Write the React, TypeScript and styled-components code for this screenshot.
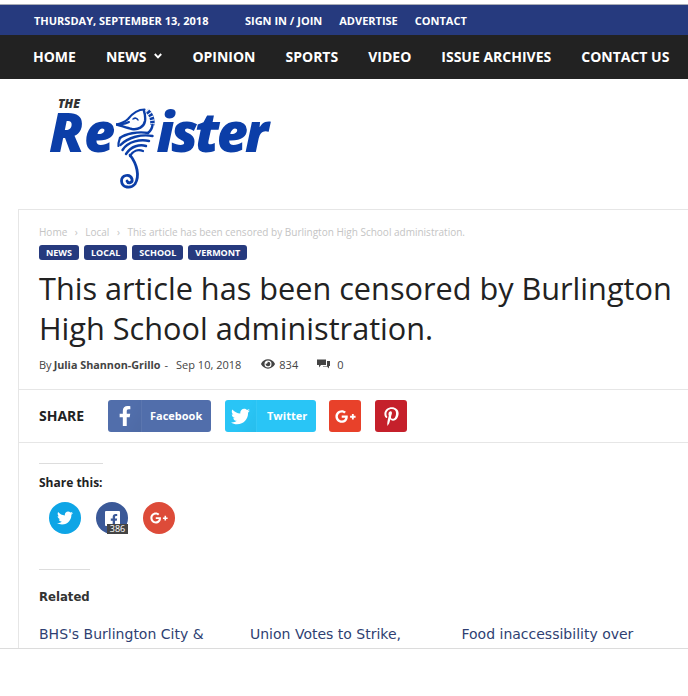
import React from 'react';
import styled, { createGlobalStyle } from 'styled-components';
import { FaFacebookF, FaTwitter, FaGooglePlusG, FaPinterestP, FaEye } from 'react-icons/fa';

const GlobalStyle = createGlobalStyle`
  html, body {
    margin: 0;
    padding: 0;
    background: #fff;
  }
  body {
    font-family: "Open Sans", "Liberation Sans", sans-serif;
    overflow: hidden;
  }
`;

const topLinks = ['Sign in / Join', 'Advertise', 'Contact'];
const navLinks = ['Home', 'News', 'Opinion', 'Sports', 'Video', 'Issue Archives', 'Contact Us'];
const tags = ['News', 'Local', 'School', 'Vermont'];
const related = ["BHS's Burlington City &", 'Union Votes to Strike,', 'Food inaccessibility over'];

const Seahorse = () => (
  <HorseSvg viewBox="0 0 40 82" width="40" height="82">
    <g fill="none" stroke="#0b3ea8" strokeLinecap="round" strokeLinejoin="round">
      <path d="M0.5 16.5 C5 15.5 9 14 12 11 C16 6 22 1.5 28.5 1.5" strokeWidth="2.2" />
      <path d="M0.5 16.5 C6 18 11 20 16 21 C22 22 28 19 29 13 C29.5 9 29 6 28 3" strokeWidth="2.4" />
      <path d="M3 16.8 C7 16 10 15.5 13 14" strokeWidth="2" />
      <path d="M17 11 C19 9.5 21 10 22 12" strokeWidth="1.5" />
      <path d="M31 2.5 C35 6 37 11 36.5 17" strokeWidth="4.5" strokeLinecap="butt" />
      <path d="M31 2.5 C35 6 37 11 36.5 17" stroke="#fff" strokeWidth="4.6" strokeLinecap="butt" strokeDasharray="1 2.6" />
      <path d="M36.5 17 C36 21 34.5 23 32 25" strokeWidth="2.4" />
      <path d="M32 25 C22 23 9 26 4 30" strokeWidth="2.4" />
      <path d="M4 30 C3 33 2 35 2.5 38" strokeWidth="2.2" />
      <path d="M36.5 28 C26 26 12 29 4.5 37" strokeWidth="2.4" />
      <path d="M33 33 C25 31 12 33 6.5 42" strokeWidth="2.4" />
      <path d="M30 38 C24 36 15 38 10 46" strokeWidth="2.4" />
      <path d="M27 43 C22 41 17 43 14 48" strokeWidth="2.2" />
      <path d="M14 47 C21 56 24 68 19 76 C15 81 6 80 5.5 73 C5.5 67 14 65 16 71 C17 75 12 76 11 73" strokeWidth="2.8" />
    </g>
  </HorseSvg>
);

const App = () => {
  return (
    <Page>
      <GlobalStyle />
      <TopBar>
        <DateText>Thursday, September 13, 2018</DateText>
        <TopLinks>
          {topLinks.map((link) => (
            <TopLink key={link}>{link}</TopLink>
          ))}
        </TopLinks>
      </TopBar>
      <NavBar>
        {navLinks.map((link) => (
          <NavLink key={link}>
            {link}
            {link === 'News' && (
              <svg width="8" height="6" viewBox="0 0 8 6">
                <path d="M0.8 1 L4 4.4 L7.2 1" fill="none" stroke="#fff" strokeWidth="1.9" />
              </svg>
            )}
          </NavLink>
        ))}
      </NavBar>
      <Masthead>
        <Logo>
          <LogoThe>THE</LogoThe>
          <LogoWord>
            <span>Re</span>
            <Seahorse />
            <LogoTail>ister</LogoTail>
          </LogoWord>
        </Logo>
      </Masthead>
      <Card>
        <ArticleHead>
          <Breadcrumbs>
            <span>Home</span>
            <Chevron>›</Chevron>
            <span>Local</span>
            <Chevron>›</Chevron>
            <span>This article has been censored by Burlington High School administration.</span>
          </Breadcrumbs>
          <Tags>
            {tags.map((tag) => (
              <Tag key={tag}>{tag}</Tag>
            ))}
          </Tags>
          <Title>This article has been censored by Burlington High School administration.</Title>
          <Meta>
            <span>By</span>
            <Author>Julia Shannon-Grillo</Author>
            <span>-</span>
            <DateLabel>Sep 10, 2018</DateLabel>
            <Stat $gap={20}>
              <FaEye size={14} color="#444" />
              834
            </Stat>
            <Stat $gap={19}>
              <svg width="13" height="10" viewBox="0 0 13 10">
                <path d="M0 0.5 H9 V6 H4 L2 8.5 V6 H0 Z M10 2 H13 V7 H12 V9.5 L10 7.5 H6 L6 7 H10 Z" fill="#444" />
              </svg>
              <StatZero>0</StatZero>
            </Stat>
          </Meta>
        </ArticleHead>
        <ShareRow>
          <ShareLabel>Share</ShareLabel>
          <WideButton $bg="#516eab" $w={103}>
            <ButtonIcon $w={34}><FaFacebookF size={20} /></ButtonIcon>
            <ButtonText $ml={8}>Facebook</ButtonText>
          </WideButton>
          <WideButton $bg="#29c5f6" $w={91}>
            <ButtonIcon $w={32}><FaTwitter size={19} /></ButtonIcon>
            <ButtonText $ml={10}>Twitter</ButtonText>
          </WideButton>
          <SquareGroup>
            <SquareButton $bg="#e8412a"><FaGooglePlusG size={21} /></SquareButton>
            <SquareButton $bg="#c5202b"><FaPinterestP size={19} /></SquareButton>
          </SquareGroup>
        </ShareRow>
        <Body>
          <Rule />
          <SectionTitle>Share this:</SectionTitle>
          <Circles>
            <Circle $bg="#0ea5e6"><FaTwitter size={16} /></Circle>
            <Circle $bg="#3b5998">
              <FbSquare><FaFacebookF size={12} /></FbSquare>
              <Count>386</Count>
            </Circle>
            <Circle $bg="#dd4b39"><FaGooglePlusG size={18} /></Circle>
          </Circles>
          <RelatedRule />
          <RelatedTitle>Related</RelatedTitle>
          <RelatedRow>
            {related.map((item) => (
              <RelatedLink key={item}>{item}</RelatedLink>
            ))}
          </RelatedRow>
        </Body>
      </Card>
      <FootLine />
    </Page>
  );
};

const Page = styled.div`
  width: 688px;
  height: 696px;
  padding-top: 4px;
  box-sizing: border-box;
  overflow: hidden;
  display: flex;
  flex-direction: column;
`;

const TopBar = styled.div`
  height: 30px;
  flex: none;
  border-top: 1px solid #a9acb5;
  background: #263a7e;
  display: flex;
  align-items: center;
  padding-left: 34px;
  color: #fff;
  font-size: 11px;
  font-weight: 700;
  text-transform: uppercase;
`;

const DateText = styled.span`
  margin-right: 36.5px;
`;

const TopLinks = styled.div`
  display: flex;
  gap: 17px;
`;

const TopLink = styled.span``;

const NavBar = styled.div`
  height: 44px;
  flex: none;
  box-sizing: border-box;
  padding: 0 0 2px 33px;
  background: #222;
  display: flex;
  align-items: center;
  gap: 30px;
  color: #fff;
  font-size: 14px;
  font-weight: 700;
  text-transform: uppercase;
`;

const NavLink = styled.span`
  display: flex;
  align-items: center;
  gap: 8px;
`;

const Masthead = styled.div`
  height: 130px;
  flex: none;
  padding: 19px 0 0 49px;
  box-sizing: border-box;
`;

const Logo = styled.div`
  display: flex;
  flex-direction: column;
  width: 230px;
`;

const LogoThe = styled.div`
  font-size: 12px;
  line-height: 11px;
  font-weight: 800;
  font-style: italic;
  color: #333;
  margin-left: 9px;
`;

const LogoWord = styled.div`
  display: flex;
  align-items: flex-start;
  margin-top: -5px;
  color: #0b3ea8;
  font-size: 54px;
  line-height: 54px;
  font-weight: 800;
  font-style: italic;
  font-family: "Open Sans", sans-serif;
`;

const LogoTail = styled.span`
  letter-spacing: -3px;
`;

const HorseSvg = styled.svg`
  flex: none;
  margin: 4px 0 0 1px;
`;

const Card = styled.div`
  height: 439px;
  flex: none;
  margin-left: 18px;
  border-top: 1px solid #e6e6e6;
  border-left: 1px solid #e6e6e6;
  box-sizing: border-box;
  overflow: hidden;
`;

const FootLine = styled.div`
  height: 1px;
  flex: none;
  background: #dcdcdc;
`;

const ArticleHead = styled.div`
  padding: 15px 0 0 20px;
  height: 180px;
  box-sizing: border-box;
  border-bottom: 1px solid #e6e6e6;
`;

const Breadcrumbs = styled.div`
  display: flex;
  align-items: center;
  height: 14px;
  font-size: 10px;
  color: #c4c4c4;
  white-space: nowrap;
`;

const Chevron = styled.span`
  margin: 0 7.5px;
`;

const Tags = styled.div`
  display: flex;
  gap: 5px;
  margin-top: 6px;
`;

const Tag = styled.span`
  height: 15px;
  line-height: 15px;
  padding: 0 7px;
  border-radius: 3px;
  background: #263a7e;
  color: #fff;
  font-size: 9px;
  font-weight: 700;
  text-transform: uppercase;
`;

const Title = styled.h1`
  margin: 8px 0 0;
  width: 640px;
  font-size: 30.66px;
  line-height: 40px;
  font-weight: 400;
  color: #222;
`;

const Meta = styled.div`
  display: flex;
  align-items: center;
  height: 16px;
  margin-top: 8px;
  font-size: 11px;
  color: #444;
`;

const Author = styled.span`
  font-weight: 700;
  font-size: 10.8px;
  margin: 0 4px 0 2px;
`;

const DateLabel = styled.span`
  margin-left: 8px;
`;

const Stat = styled.span<{ $gap: number }>`
  display: flex;
  align-items: center;
  gap: 4px;
  margin-left: ${(p) => p.$gap}px;
`;

const StatZero = styled.span`
  margin-left: 3px;
`;

const ShareRow = styled.div`
  height: 53px;
  box-sizing: border-box;
  border-bottom: 1px solid #e6e6e6;
  padding-left: 20px;
  display: flex;
  align-items: center;
  gap: 14px;
`;

const ShareLabel = styled.span`
  width: 55px;
  padding-bottom: 2px;
  font-size: 14px;
  font-weight: 700;
  color: #222;
  text-transform: uppercase;
`;

const WideButton = styled.div<{ $bg: string; $w: number }>`
  width: ${(p) => p.$w}px;
  height: 32px;
  border-radius: 3px;
  background: ${(p) => p.$bg};
  color: #fff;
  display: flex;
  align-items: center;
`;

const ButtonIcon = styled.span<{ $w: number }>`
  width: ${(p) => p.$w}px;
  height: 32px;
  box-sizing: border-box;
  border-right: 1px solid rgba(255, 255, 255, 0.06);
  background: linear-gradient(120deg, rgba(0, 0, 0, 0) 55%, rgba(0, 0, 0, 0.04) 100%);
  display: flex;
  align-items: center;
  justify-content: center;
`;

const ButtonText = styled.span<{ $ml: number }>`
  margin-left: ${(p) => p.$ml}px;
  padding-bottom: 2px;
  font-size: 11px;
  font-weight: 700;
`;

const SquareGroup = styled.div`
  display: flex;
  gap: 14px;
  margin-left: -1px;
`;

const SquareButton = styled.div<{ $bg: string }>`
  width: 32px;
  height: 32px;
  border-radius: 3px;
  background: ${(p) => p.$bg};
  color: #fff;
  display: flex;
  align-items: center;
  justify-content: center;
`;

const Body = styled.div`
  padding: 20px 0 0 20px;
`;

const Rule = styled.div`
  width: 64px;
  border-top: 1px solid #ddd;
`;

const SectionTitle = styled.div`
  margin-top: 11px;
  font-size: 12px;
  line-height: 16px;
  font-weight: 700;
  color: #222;
`;

const Circles = styled.div`
  display: flex;
  gap: 15px;
  margin: 11px 0 0 10px;
`;

const Circle = styled.div<{ $bg: string }>`
  position: relative;
  width: 32px;
  height: 32px;
  border-radius: 50%;
  background: ${(p) => p.$bg};
  color: #fff;
  display: flex;
  align-items: center;
  justify-content: center;
`;

const FbSquare = styled.span`
  width: 15px;
  height: 15px;
  background: #fff;
  color: #3b5998;
  border-radius: 1px;
  display: flex;
  align-items: flex-end;
  justify-content: flex-end;
  overflow: hidden;
`;

const Count = styled.span`
  position: absolute;
  right: 0;
  bottom: 0;
  width: 21px;
  height: 10px;
  background: #444;
  color: #fff;
  font-size: 9px;
  line-height: 10px;
  text-align: center;
`;

const RelatedRule = styled.div`
  width: 51px;
  margin-top: 35px;
  border-top: 1px solid #ddd;
`;

const RelatedTitle = styled.div`
  margin-top: 18px;
  font-family: "DejaVu Sans Condensed", "DejaVu Sans", sans-serif;
  font-size: 13px;
  line-height: 18px;
  font-weight: 700;
  color: #333;
`;

const RelatedRow = styled.div`
  display: grid;
  grid-template-columns: 211px 211.5px 211px;
  margin-top: 19px;
`;

const RelatedLink = styled.span`
  font-family: "DejaVu Sans", sans-serif;
  font-size: 14px;
  line-height: 18px;
  color: #2f3f72;
  white-space: nowrap;
`;

export default App;
